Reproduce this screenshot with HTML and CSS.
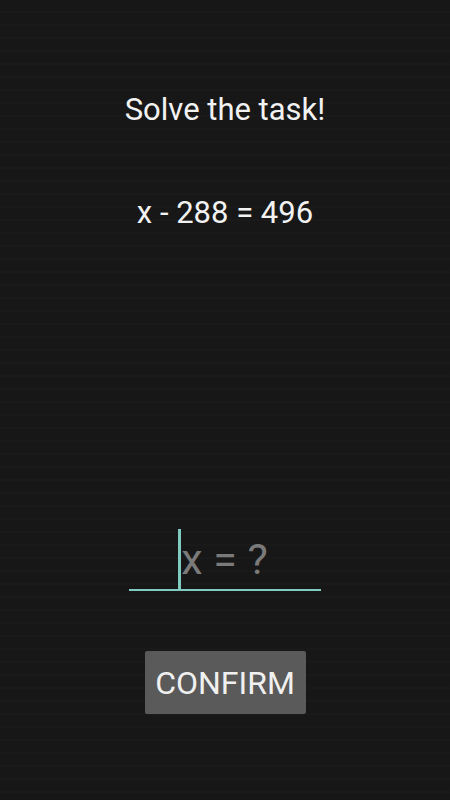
FILE: index.html
```html
<!DOCTYPE html>
<html>
<head>
<meta charset="utf-8">
<link rel="stylesheet" href="styles.css">
</head>
<body>
<main class="screen">
  <h1 class="title">Solve the task!</h1>
  <p class="task">x - 288 = 496</p>
  <div class="spacer"></div>
  <div class="field">
    <span class="cursor"></span><span class="hint">x = ?</span>
  </div>
  <button class="confirm">CONFIRM</button>
</main>
</body>
</html>
```
FILE: styles.css
```css
html, body {
  margin: 0;
  padding: 0;
  background: #171717;
}
.screen {
  width: 450px;
  height: 800px;
  display: flex;
  flex-direction: column;
  align-items: center;
  font-family: Roboto, "Liberation Sans", sans-serif;
  color: #f2f2f2;
  background: repeating-linear-gradient(180deg, #171717 0px, #171717 11px, #1c1c1c 12px, #171717 13px);
}
.title {
  margin: 92px 0 0 0;
  font-size: 31px;
  font-weight: 400;
  line-height: 36px;
}
.task {
  margin: 67px 0 0 0;
  font-size: 31px;
  line-height: 36px;
}
.spacer {
  height: 298px;
}
.field {
  width: 192px;
  height: 62px;
  border-bottom: 2px solid #80cbc0;
  display: flex;
  align-items: flex-end;
  justify-content: center;
  box-sizing: border-box;
}
.cursor {
  width: 3px;
  height: 60px;
  background: #80cbc0;
}
.hint {
  font-size: 43px;
  line-height: 50px;
  color: #7a7a7a;
  margin-right: 4px;
  padding-bottom: 5px;
}
.confirm {
  margin-top: 60px;
  width: 161px;
  height: 63px;
  border: none;
  border-radius: 2px;
  background: #5a5a5a;
  color: #f0f0f0;
  font-family: Roboto, "Liberation Sans", sans-serif;
  font-size: 32px;
  padding: 0;
}
```
